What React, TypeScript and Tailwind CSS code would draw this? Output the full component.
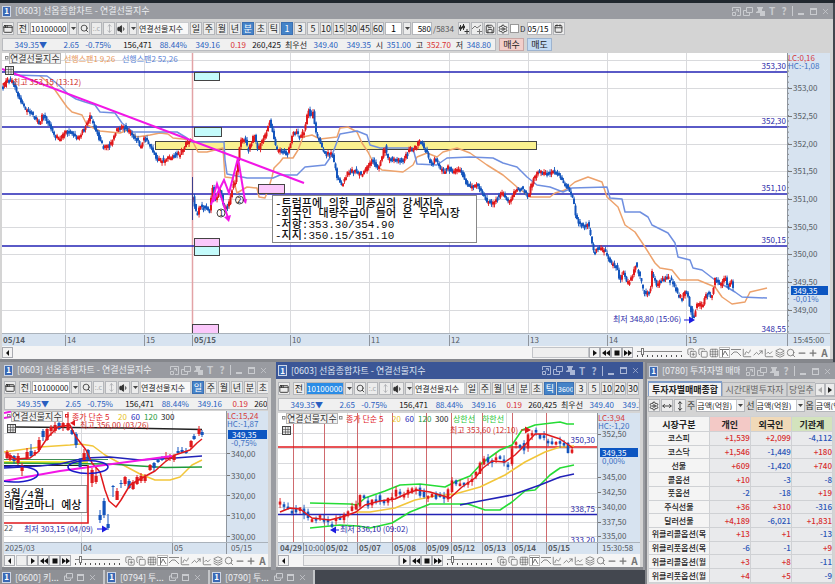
import React from "react";
import {
  AppWindow, Calendar, ChartLine, ChartSpline, Copy, CopyPlus, Grid3x3, Layers, Minus,
  MoveHorizontal, MoveVertical, Plus, Save, Search, Settings, TrendingUp, Volume1, X,
} from "lucide-react";

type Pt = [number, number];
const RED = "#e0191c";
const BLUE = "#1455bd";
const NAVY = "#2a28a8";
const FONT = "font-['Noto_Sans_CJK_KR',sans-serif]";
const MONO = "font-['Liberation_Mono','Noto_Sans_CJK_KR',monospace]";

const toPoints = (s: string): Pt[] => s.split(" ").map((p) => p.split(",").map(Number) as Pt);

function valueAt(pts: Pt[], x: number) {
  if (x <= pts[0][0]) return pts[0][1];
  for (let i = 1; i < pts.length; i++) {
    if (x <= pts[i][0]) {
      const [x0, y0] = pts[i - 1];
      const [x1, y1] = pts[i];
      return y0 + ((y1 - y0) * (x - x0)) / (x1 - x0 || 1);
    }
  }
  return pts[pts.length - 1][1];
}

const noise = (n: number) => {
  const v = Math.sin(n * 127.1 + 3.7) * 43758.5453;
  return v - Math.floor(v) - 0.5;
};

/* Candles that follow a price path at a fixed step. */
function Candles({ path, step, width, spread }: { path: string; step: number; width: number; spread: number }) {
  const pts = toPoints(path);
  const end = pts[pts.length - 1][0];
  const out: React.ReactNode[] = [];
  for (let x = pts[0][0]; x <= end; x += step) {
    const open = valueAt(pts, x - step) + noise(x) * spread;
    const close = valueAt(pts, x) + noise(x + 9) * spread;
    const up = close < open;
    const top = Math.min(open, close);
    const h = Math.max(2.6, Math.abs(open - close));
    const color = up ? RED : BLUE;
    const a = Math.abs(noise(x + 31)) * spread * 1.5;
    const b = Math.abs(noise(x + 57)) * spread * 1.5;
    out.push(
      <g key={x} fill={color}>
        <rect x={x - 0.4} y={top - a} width={0.9} height={h + a + b} />
        <rect x={x - width / 2} y={top} width={width} height={h} />
      </g>
    );
  }
  return <g>{out}</g>;
}

const Line = ({ p, c, w = 1.2 }: { p: string; c: string; w?: number }) => (
  <polyline points={p} fill="none" stroke={c} strokeWidth={w} strokeLinejoin="round" />
);

function T({ x, y, c = "#555b63", s = 9, end, bold, children }: {
  x: number; y: number; c?: string; s?: number; end?: boolean; bold?: boolean; children: React.ReactNode;
}) {
  return (
    <text x={x} y={y} fill={c} fontSize={s} textAnchor={end ? "end" : "start"} fontWeight={bold ? 700 : 400}>
      {children}
    </text>
  );
}

const Rules = ({ xs = [], ys = [], l, r, t, b, c = "#d9dadd" }: {
  xs?: number[]; ys?: number[]; l: number; r: number; t: number; b: number; c?: string;
}) => (
  <g stroke={c}>
    {xs.map((x) => <line key={"x" + x} x1={x + 0.5} x2={x + 0.5} y1={t} y2={b} />)}
    {ys.map((y) => <line key={"y" + y} y1={y + 0.5} y2={y + 0.5} x1={l} x2={r} />)}
  </g>
);

const GridMark = ({ x, y }: { x: number; y: number }) => (
  <g stroke="#444" fill="#e6e6e6">
    <rect x={x + 0.5} y={y + 0.5} width={8} height={8} />
    <path d={`M${x + 1} ${y + 3.5}h7M${x + 1} ${y + 6}h7M${x + 3.5} ${y + 1}v7M${x + 6} ${y + 1}v7`} strokeWidth={0.6} />
  </g>
);

const Bullet = ({ x, y, c = "#888" }: { x: number; y: number; c?: string }) => (
  <rect x={x + 0.5} y={y - 5.5} width={2.5} height={2.5} fill="none" stroke={c} />
);

const LegendName = ({ x, y }: { x: number; y: number }) => (
  <g>
    <Bullet x={x - 6} y={y} />
    <rect x={x - 1.5} y={y - 8.5} width={51} height={10} fill="#f2f2f2" stroke="#b5b5b5" />
    <T x={x - 1} y={y} c="#333">연결선물지수</T>
  </g>
);

const MAIN_A =
  "3,86 8,79 12,82 17,92 20,101 25,108 32,114 40,124 42,115 48,121 53,133 60,139 67,131 78,138 85,127 90,117 95,127 101,144 110,146 115,132 122,125 128,130 136,138 140,147 144,138 150,145 157,159 165,160 172,155 180,153 187,142 191,140";
const MAIN_B =
  "193,198 197,217 200,205 205,208 210,210 212,185 215,200 220,190 224,208 228,207 232,190 236,178 238,160 240,142 245,138 248,152 254,135 258,150 263,140 267,132 269,120 272,130 276,149 288,154 293,130 300,136 305,130 308,107 311,118 313,113 316,132 320,143 325,154 332,153 337,177 342,185 347,173 355,170 362,175 372,160 378,168 385,147 388,158 403,160 410,147 413,150 420,141 425,149 430,162 436,160 443,172 448,167 453,172 460,169 465,181 470,186 477,183 487,201 492,203 497,197 503,192 509,203 515,190 522,187 528,196 533,180 537,172 548,174 555,170 562,180 568,188 573,200 576,217 580,225 588,224 591,237 594,253 598,247 605,250 610,262 617,267 620,282 623,272 628,283 632,277 635,263 640,277 644,293 650,292 652,273 657,285 665,277 672,280 677,293 682,298 686,290 690,307 693,318 697,305 703,303 707,293 712,295 715,278 721,285 725,277 728,290 731,281 733,286";
const SPAN1 =
  "40,76 50,84 55,90 62,100 67,107 72,112 82,115 87,125 100,131 120,133 128,130 137,137 150,135 160,133 168,134 173,138 192,140 198,152 207,152 223,148 225,177 233,178 237,193 247,187 257,188 259,197 265,198 268,190 272,177 274,168 280,162 283,158 293,158 298,150 303,137 312,135 320,139 337,137 340,128 348,127 357,132 362,143 368,152 373,162 382,170 403,172 413,165 417,157 427,153 437,157 443,152 457,148 470,153 487,165 503,175 517,187 530,197 550,197 555,193 565,190 575,182 588,177 602,182 607,197 618,207 625,225 635,232 645,247 655,263 660,268 672,270 680,280 698,280 715,287 722,297 732,304 745,302 750,292 767,288";
const SPAN2 =
  "14,75 47,76 55,82 62,88 68,94 76,99 85,102 95,105 100,112 115,113 122,123 133,132 177,132 187,138 192,142 224,142 225,160 227,174 247,178 273,178 280,175 297,175 305,167 325,165 332,155 340,134 357,131 367,135 370,145 380,148 413,148 417,164 437,165 447,158 470,157 493,158 503,163 517,167 527,177 537,185 550,187 563,192 572,188 607,187 610,198 622,199 625,212 640,212 648,217 652,225 668,233 675,243 678,257 690,260 693,268 702,270 715,280 735,292 742,297 767,298";

function MainChart() {
  const hs = [60, 88, 116, 144, 171, 199, 227, 254, 282, 310];
  const labels: [string, number][] = [
    ["353,00", 88], ["352,50", 116], ["352,00", 144], ["351,50", 171], ["351,00", 199],
    ["350,50", 227], ["350,00", 254], ["349,50", 282], ["349,00", 310],
  ];
  const levels: [string, number][] = [["353,30", 72], ["352,30", 127], ["351,10", 194], ["350,15", 246]];
  return (
    <svg viewBox="2 53 828 293" className={`block h-auto w-full ${FONT}`} role="img" aria-label="연결선물지수 분봉 차트">
      <rect x="2" y="53" width="785" height="281" fill="#fff" />
      <rect x="787" y="53" width="43" height="293" fill="#d7e3f0" />
      <rect x="2" y="334" width="785" height="12" fill="#d7e3f0" />
      <Rules xs={[65, 144, 290, 369, 449, 528, 607, 686]} ys={hs} l={2} r={787} t={53} b={334} />
      <line x1="192.500" x2="192.500" y1="53" y2="334" stroke="#e3a3a6" strokeWidth="1.500" />
      <rect x="155.500" y="141.500" width="381" height="8" fill="#faf18f" stroke="#444" />
      {levels.map(([t, y]) => (
        <g key={t}>
          <line x1="2" x2="787" y1={y} y2={y} stroke="#2323b4" strokeWidth="1.600" />
          <T x={786} y={y - 3} c={NAVY} s={8} end>{t}</T>
        </g>
      ))}
      <T x={786} y={332} c={NAVY} s={8} end>348,55</T>
      <Line p={SPAN1} c="#eda26c" w={1.5} />
      <Line p={SPAN2} c="#6f8fe0" w={1.5} />
      <Candles path={MAIN_A} step={1.5} width={2} spread={4} />
      <Candles path={MAIN_B} step={1.5} width={2} spread={4} />
      <line x1="192.500" x2="192.500" y1="177" y2="220" stroke="#3c3f8c" />
      <g stroke="#444">
        <rect x="194.500" y="72.500" width="25" height="8" fill="#c4fbfb" />
        <rect x="194.500" y="127.500" width="27" height="9" fill="#c4fbfb" />
        <rect x="194.500" y="238.500" width="25" height="8" fill="#fbc8fb" />
        <rect x="194.500" y="246.500" width="25" height="9" fill="#c4fbfb" />
        <rect x="192.500" y="324.500" width="26" height="9" fill="#fbc8fb" />
        <rect x="258.500" y="184.500" width="26" height="9" fill="#fbc8fb" />
      </g>
      <line x1="2" y1="69" x2="304" y2="183" stroke="#f216e6" strokeWidth="2" />
      <g stroke="#f216e6" fill="none" strokeWidth="2">
        <path d="M211 205L217 184L228 218" />
        <path d="M213 202L224 180L229 193L238 158L245 201" />
      </g>
      <path d="M224 217l7-2l-2 7zM242 200l5-1l-1 5z" fill="#f216e6" />
      <g fill="none" stroke="#444">
        <circle cx="221" cy="213" r="4" />
        <circle cx="239.500" cy="200" r="4" />
      </g>
      <T x={219} y={216} c="#222" s={8}>1</T>
      <T x={237} y={203} c="#222" s={8}>2</T>
      <rect x="272.500" y="195.500" width="204" height="47" fill="#fff" stroke="#888" />
      <g className={MONO} fill="#111" fontSize="11" fontWeight="500">
        <text x="275" y="207">-트럼프에 의한 미증시의 강세지속</text>
        <text x="275" y="217">-외국인 대량수급이 들어 온 우리시장</text>
        <text x="275" y="228">-저항:353.30/354.90</text>
        <text x="275" y="239">-지지:350.15/351.10</text>
      </g>
      <LegendName x={11} y={62} />
      <T x={64} y={62} c="#e8985c" s={8}>선행스팬1 9,26</T>
      <T x={122} y={62} c="#5b83d6" s={8}>선행스팬2 52,26</T>
      <T x={13} y={85} c="#d02a2a" s={8}>최고 353,15 (13:12)</T>
      <path d="M2 84l5-4v8z" fill={RED} />
      <GridMark x={5} y={66} />
      <T x={613} y={322} c={NAVY} s={8}>최저 348,80 (15:06)</T>
      <path d="M684 319.500h5v-3l6 3.500l-6 3.500v-3h-5z" fill="#1c1ce0" />

      <line x1="787.500" x2="787.500" y1="53" y2="346" stroke="#8e959e" />
      <line x1="2" x2="830" y1="333.500" y2="333.500" stroke="#aab2bb" />
      {Array.from({ length: 50 }, (_, i) => (
        <line key={i} x1="788" x2="789" y1={60 + i * 5.55} y2={60 + i * 5.55} stroke="#888" />
      ))}
      {labels.map(([t, y]) => (
        <g key={t}>
          <line x1="788" x2="792" y1={y + 0.5} y2={y + 0.5} stroke="#777" />
          <T x={793} y={y + 3} s={8}>{t}</T>
        </g>
      ))}
      <T x={788} y={61} c="#d63a3a" s={8}>LC:0,16</T>
      <T x={788} y={69} c="#3f72c4" s={8}>HC:-1,08</T>
      <rect x="791" y="286" width="37" height="9" fill="#0c56c2" />
      <T x={793} y={294} c="#fff" s={8}>349,35</T>
      <T x={793} y={302} c="#3f72c4" s={8}>-0,01%</T>
      <Rules xs={[65, 144, 192, 290, 369, 449, 528, 607, 686]} l={2} r={2} t={335} b={346} c="#8e959e" />
      <T x={3} y={343} s={8} bold>05/14</T>
      <T x={194} y={343} s={8} bold>05/15</T>
      {([["14", 67], ["15", 146], ["10", 292], ["11", 371], ["12", 451], ["13", 530], ["14", 609], ["15", 688]] as [string, number][]).map(([t, x]) => (
        <T key={x} x={x} y={343} s={8}>{t}</T>
      ))}
      <T x={793} y={343} s={8}>15:45:00</T>
    </svg>
  );
}

/* x, wick top, body top, body bottom, wick bottom, up */
const DAILY: [number, number, number, number, number, number][] = [
  [7, 450, 452, 458, 459, 1], [10, 453, 455, 460, 461, 1], [14, 455, 456, 461, 464, 0], [18, 453, 456, 463, 465, 1],
  [22, 463, 465, 471, 476, 1], [27, 448, 452, 458, 460, 1], [31, 444, 451, 456, 457, 0], [35, 450, 452, 454, 456, 1],
  [39, 437, 440, 450, 452, 1], [43, 429, 431, 437, 441, 0], [47, 428, 429, 440, 441, 1], [51, 425, 427, 431, 436, 1],
  [55, 421, 425, 431, 433, 1], [59, 421, 423, 429, 430, 0], [63, 422, 423, 427, 431, 1], [68, 412, 423, 430, 431, 1],
  [72, 427, 430, 434, 435, 0], [76, 432, 434, 445, 448, 0], [80, 458, 460, 467, 469, 0], [84, 449, 453, 460, 461, 1],
  [88, 449, 450, 459, 460, 0], [92, 468, 470, 483, 487, 1], [96, 468, 476, 482, 484, 1], [100, 510, 515, 520, 523, 0],
  [104, 498, 501, 515, 518, 0], [108, 514, 524, 528, 530, 0], [113, 485, 486, 487, 497, 0], [117, 488, 491, 500, 500, 1],
  [121, 480, 483, 484, 488, 0], [125, 476, 477, 484, 486, 1], [129, 479, 481, 488, 489, 0], [133, 480, 482, 489, 490, 1],
  [137, 475, 477, 484, 485, 1], [141, 473, 476, 481, 483, 1], [145, 474, 477, 481, 483, 1], [150, 464, 465, 470, 471, 1],
  [154, 462, 463, 468, 472, 0], [158, 459, 460, 462, 463, 0], [162, 456, 457, 460, 461, 0], [166, 452, 456, 459, 461, 1],
  [170, 454, 456, 459, 461, 1], [174, 454, 455, 460, 462, 1], [178, 447, 451, 453, 454, 0], [182, 447, 450, 452, 453, 0],
  [186, 448, 451, 453, 454, 0], [191, 440, 441, 447, 449, 1], [194, 434, 436, 439, 440, 0], [199, 426, 429, 434, 436, 1],
  [202, 430, 432, 435, 437, 0],
];

function DailyChart() {
  const labels: [string, number][] = [["340,00", 453], ["330,00", 475], ["320,00", 495], ["310,00", 515], ["300,00", 536]];
  return (
    <svg viewBox="4 411 264 143" className={`block h-auto w-full ${FONT}`} role="img" aria-label="연결선물지수 일봉 차트">
      <rect x="4" y="411" width="222" height="131" fill="#fff" />
      <rect x="226" y="411" width="42" height="143" fill="#d7e3f0" />
      <rect x="4" y="542" width="222" height="12" fill="#d7e3f0" />
      <Rules xs={[81, 172]} ys={[433, 453, 475, 495, 515, 536]} l={4} r={226} t={411} b={542} />
      <rect x="4" y="461" width="84" height="3" fill="#f0ea3c" />
      <path d="M4 465.500h84" stroke="#222" />
      <path d="M4 459.500h104" stroke="#3f8f56" />
      <Line p="15,427 125,428 202,429.500" c="#222" w={1.5} />
      <Line p="4,452 40,447 70,445 80,444 93,446 105,455 125,466 140,474 155,480 170,480 180,477 192,465 202,460" c="#f2c63a" w={1.5} />
      <Line p="4,463 110,464 140,466 165,467.500 202,467" c="#1f9a3c" w={1.5} />
      <Line p="4,468 40,466 60,464 85,458 110,457 140,460 175,458 202,456" c="#2222b8" w={1.5} />
      {DAILY.map(([x, wt, t, b, wb, up]) => (
        <g key={x} fill={up ? RED : BLUE}>
          <rect x={x - 0.5} y={wt} width={1} height={wb - wt} />
          <rect x={x - 1.5} y={t} width={3.2} height={b - t} />
        </g>
      ))}
      <Line p="7,454 15,459 30,458 38,452 48,437 58,427 70,425 76,437 86,450 92,463 100,472 105,490 109,501 116,507 121,500 130,485 140,479 155,471 165,462 175,455 190,450 197,443 202,439" c={RED} w={1.5} />
      <path d="M4 481L60 471L172 456M4 418L45 411M4 413L28 408" stroke="#f216e6" strokeWidth="2" fill="none" />
      <g fill="none" stroke="#1a1ac8" strokeWidth="1.600">
        <ellipse cx="88" cy="467" rx="20" ry="6.500" />
        <ellipse cx="14" cy="474" rx="24" ry="8" />
      </g>
      <rect x="-4" y="485.500" width="91" height="27" fill="#fff" stroke="#888" />
      <g className={MONO} fill="#111" fontSize="11" fontWeight="500">
        <text x="4" y="498">3월/4월</text>
        <text x="4" y="509">데칼코마니 예상</text>
      </g>
      <path d="M4 523h84V465" fill="none" stroke={RED} strokeWidth="1.600" />
      <T x={4} y={531} s={8}>22</T>
      <T x={24} y={532} c={NAVY} s={8}>최저 303,15 (04/09)</T>
      <path d="M97 528.500h5v-3l6 3.500l-6 3.500v-3h-5z" fill="#1c1ce0" />
      <LegendName x={13} y={420} />
      <Bullet x={65} y={420} c={RED} />
      <T x={72} y={420} c={RED} s={8}>종가 단순 5</T>
      <T x={118} y={420} c="#e8c21c" s={8}>20</T>
      <T x={131} y={420} c="#2222b8" s={8}>60</T>
      <T x={144} y={420} c="#1f9a3c" s={8}>120</T>
      <T x={161} y={420} c="#222" s={8}>300</T>
      <T x={80} y={428} c="#d02a2a" s={8}>최고 356,00 (03/26)</T>
      <path d="M70 423l5-3v6z" fill={RED} />
      <GridMark x={7} y={424} />
      <line x1="226.500" x2="226.500" y1="411" y2="554" stroke="#8e959e" />
      <line x1="4" x2="268" y1="542.500" y2="542.500" stroke="#aab2bb" />
      {labels.map(([t, y]) => (
        <g key={t}>
          <line x1="227" x2="230" y1={y + 0.5} y2={y + 0.5} stroke="#777" />
          <T x={231} y={y + 4} s={8}>{t}</T>
        </g>
      ))}
      <T x={227} y={419} c="#d63a3a" s={8}>LC:15,24</T>
      <T x={227} y={427} c="#3f72c4" s={8}>HC:-1,87</T>
      <rect x="228" y="430" width="39" height="9" fill="#0c56c2" />
      <T x={232} y={438} c="#fff" s={8}>349,35</T>
      <T x={231} y={446} c="#3f72c4" s={8}>-0,75%</T>
      <Rules xs={[81, 172]} l={4} r={4} t={543} b={554} c="#8e959e" />
      <T x={5} y={551} s={8}>2025/03</T>
      <T x={83} y={551} s={8}>04</T>
      <T x={174} y={551} s={8}>05</T>
      <T x={231} y={551} s={8}>05/15</T>
    </svg>
  );
}

const TICK =
  "280,503 285,508 290,510 296,510 302,506 306,520 312,518 320,518 326,520 330,526 335,519 341,517 346,511 350,508 355,511 358,495 362,496 367,505 372,501 376,498 382,502 388,498 392,495 397,490 402,496 408,491 413,488 417,491 422,496 428,494 433,496 440,498 446,498 451,482 457,482 462,483 470,480 476,474 482,458 488,462 494,456 499,455 504,464 508,466 512,447 518,443 524,448 529,431 535,434 541,436 547,442 552,440 558,440 563,444 568,452 574,452";

function TickChart() {
  const reds = [293, 324, 357, 392, 426, 451, 482, 512, 546];
  const dates: [string, number][] = [
    ["04/29", 280], ["05/02", 326], ["05/07", 359], ["05/08", 394], ["05/09", 427], ["05/12", 453],
    ["05/13", 484], ["05/14", 514], ["05/15", 548],
  ];
  const labels: [string, number][] = [
    ["352,50", 434], ["345,00", 477], ["342,50", 492], ["340,00", 507], ["337,50", 522], ["335,00", 536],
  ];
  return (
    <svg viewBox="278 413 362 141" className={`block h-auto w-full ${FONT}`} role="img" aria-label="연결선물지수 틱 차트">
      <rect x="278" y="413" width="319" height="129" fill="#fff" />
      <rect x="597" y="413" width="43" height="141" fill="#d7e3f0" />
      <rect x="278" y="542" width="319" height="12" fill="#d7e3f0" />
      <Rules xs={[302, 347, 380, 414, 474, 506, 536, 568]} ys={[433, 448, 463, 478, 493, 507, 522, 536]} l={278} r={597} t={413} b={542} />
      <Rules xs={reds} l={278} r={278} t={413} b={542} c="#cf6a6e" />
      <path d="M278 447h319" stroke={RED} strokeWidth="1.600" />
      <path d="M278 514.500h319" stroke="#2323b4" strokeWidth="1.500" />
      <Line p="310,503 350,504 357,505 365,498 385,491 400,485 420,484 445,487 455,482 470,476 482,463 500,450 512,445 522,430 535,425 560,422 567,424 574,424" c="#25dc35" w={1.6} />
      <Line p="310,528 340,525 358,526 370,528 392,523 410,512 430,504 450,504 468,504 485,510 500,510 512,502 525,491 535,490 550,475 560,468 574,465" c="#25dc35" w={1.6} />
      <Line p="356,512 370,512 395,508 415,500 435,496 455,494 480,487 505,475 525,462 545,452 560,447 574,446" c="#f2c63a" w={1.6} />
      <Line p="460,505 480,501 512,495 540,485 560,477 574,474" c="#2222b8" w={1.6} />
      <Candles path={TICK} step={4} width={2.6} spread={6} />
      <Line p="280,512 290,508 300,509 312,518 330,520 345,516 356,512 365,505 380,501 395,499 408,493 417,490 430,492 450,498 462,487 475,478 483,468 492,461 505,462 515,455 525,445 535,434 545,434 560,439 573,448" c={RED} w={1.5} />
      <LegendName x={288} y={422} />
      <Bullet x={339} y={422} />
      <T x={346} y={422} c={RED} s={8}>종가 단순 5</T>
      <T x={392} y={422} c="#e8c21c" s={8}>20</T>
      <T x={405} y={422} c="#2222b8" s={8}>60</T>
      <T x={418} y={422} c="#1f9a3c" s={8}>120</T>
      <T x={435} y={422} c="#222" s={8}>300</T>
      <T x={453} y={422} c="#25c435" s={8}>상한선</T>
      <T x={482} y={422} c="#25c435" s={8}>하한선</T>
      <T x={450} y={433} c="#d02a2a" s={8}>최고 353,60 (12:10)</T>
      <path d="M521 429.500h4v-3l6 3.500l-6 3.500v-3h-4z" fill={RED} />
      <T x={340} y={532} c={NAVY} s={8}>최저 336,10 (09:02)</T>
      <path d="M339 529.500h-3v-3l-6 3.500l6 3.500v-3h3z" fill="#1c1ce0" />
      <GridMark x={282} y={426} />
      <T x={595} y={443} c={NAVY} s={8} end>350,30</T>
      <T x={595} y={512} c={NAVY} s={8} end>338,75</T>
      <svg x="560" y="530" width="36" height="12" viewBox="560 530 36 12">
        <T x={595} y={543} c={NAVY} s={8} end>333,20</T>
      </svg>
      <line x1="597.500" x2="597.500" y1="413" y2="554" stroke="#8e959e" />
      <line x1="278" x2="640" y1="542.500" y2="542.500" stroke="#aab2bb" />
      {labels.map(([t, y]) => (
        <g key={t}>
          <line x1="598" x2="601" y1={y + 0.5} y2={y + 0.5} stroke="#777" />
          <T x={602} y={y + 3} s={8}>{t}</T>
        </g>
      ))}
      <T x={598} y={421} c="#d63a3a" s={8}>LC:3,94</T>
      <T x={598} y={429} c="#3f72c4" s={8}>HC:-1,20</T>
      <rect x="600" y="448" width="38" height="9" fill="#0c56c2" />
      <T x={602} y={456} c="#fff" s={8}>349,35</T>
      <T x={602} y={464} c="#3f72c4" s={8}>0,00%</T>
      <Rules xs={[303, ...reds.slice(1)]} l={278} r={278} t={543} b={554} c="#8e959e" />
      <T x={304} y={551} s={8}>10:00</T>
      {dates.map(([t, x]) => <T key={t} x={x} y={551} s={8} bold>{t}</T>)}
      <T x={602} y={551} s={8}>15:30:58</T>
    </svg>
  );
}

function Badge() {
  return (
    <span className="flex h-[11px] w-[9px] shrink-0 items-center justify-center border border-[#cdd6e6] bg-[#3a68b4] text-[8px] font-bold leading-none text-white">1</span>
  );
}

const Ctl = ({ label, children }: { label: string; children: React.ReactNode }) => (
  <button type="button" aria-label={label} className="flex h-3 w-3 shrink-0 items-center justify-center text-[10px] font-bold leading-none">
    {children}
  </button>
);

function TitleBar({ title, active, size = "h-4", noText }: { title: string; active?: boolean; size?: string; noText?: boolean }) {
  return (
    <header className={`flex ${size} shrink-0 items-center gap-1 overflow-hidden px-0.5 text-[9px] ${active ? "bg-[#3b5696] text-[#dfe5f2]" : "bg-[#999ba1] text-[#eceef1]"}`}>
      <Badge />
      <h2 className="min-w-0 flex-1 overflow-hidden whitespace-nowrap leading-3">{title}</h2>
      <div className={`flex shrink-0 items-center ${active ? "text-[#a9b6d6]" : "text-[#c9cbcf]"}`}>
        <Ctl label="축소"><svg width="9" height="9" viewBox="0 0 9 9" fill="none" stroke="currentColor"><path d="M.5 4V.5h8v8H5M.5 5.500h3v3h-3zM4 4.500l2-2M6.500 5V2.500H4" /></svg></Ctl>
        <Ctl label="복제"><svg width="10" height="9" viewBox="0 0 10 9" fill="none" stroke="currentColor"><path d="M3.500.5h6v5h-6zM3 3.500H.5v5h6V6" /></svg></Ctl>
        <Ctl label="고정"><svg width="9" height="9" viewBox="0 0 9 9" fill="currentColor"><path d="M1 0h6v1L6 2v2h3v5H4V6H0V5l2-1V2L1 1z" /></svg></Ctl>
        {!noText && <Ctl label="글꼴">T</Ctl>}
        <Ctl label="도움말">?</Ctl>
        <span className="mx-0.5 h-2.5 w-px bg-current" />
        <Ctl label="최소화"><span className="mt-1.5 h-0.5 w-1.5 bg-current" /></Ctl>
        <Ctl label="최대화"><span className="h-[7px] w-[7px] border border-t-2 border-current" /></Ctl>
        <Ctl label="닫기"><X size={9} /></Ctl>
      </div>
    </header>
  );
}

const BTN = "flex h-[13px] shrink-0 items-center justify-center border border-[#b4b6ba] bg-[#ececec] text-[9px] leading-none text-[#222]";
const BTN_ON = "flex h-[13px] shrink-0 items-center justify-center border border-[#3b6fb2] bg-[#4583c8] text-[9px] leading-none text-white";

function Btn({ w = "w-3", on, label, children }: { w?: string; on?: boolean; label?: string; children: React.ReactNode }) {
  return <button type="button" aria-label={label} className={`${on ? BTN_ON : BTN} ${w}`}>{children}</button>;
}

const Down = () => (
  <svg width="5" height="3" viewBox="0 0 5 3"><path d="M0 0h5L2.500 3z" fill="#444" /></svg>
);

function Toolbar({ unit, nums, activeNum, extra, selected, tick }: {
  unit: string; nums: string[]; activeNum?: string; extra?: boolean; selected?: boolean; tick?: string;
}) {
  return (
    <div className="flex h-[19px] items-center gap-px overflow-hidden">
      <Btn label="창"><AppWindow size={10} className="shrink-0" /></Btn>
      <span className="w-px shrink-0" />
      <Btn>전</Btn>
      <input aria-label="종목코드" defaultValue="10100000" className={`h-[13px] w-[38px] shrink-0 border border-[#b4b6ba] text-[8px] leading-none ${selected ? "bg-[#2a8ce6] text-white" : "bg-white text-[#222]"}`} />
      <Btn w="w-2" label="종목 목록"><Down /></Btn>
      <Btn label="검색"><Search size={9} className="shrink-0" /></Btn>
      <Btn w="w-[11px]" label="코드 연결"><span className="text-[7px] text-[#a5a7ab]">:.c</span></Btn>
      <Btn label="조절"><MoveVertical size={9} className="shrink-0 text-[#a5a7ab]" /></Btn>
      <Btn label="소리"><Volume1 size={10} className="shrink-0" fill="#333" /></Btn>
      <Btn w="w-2" label="소리 목록"><Down /></Btn>
      <input aria-label="종목명" defaultValue="연결선물지수" className="h-[13px] w-[51px] shrink-0 border border-[#c8cacd] bg-[#f8f8f8] text-[8px] leading-none text-[#222]" />
      {["일", "주", "월", "년", "분", "초", "틱"].map((u) => <Btn key={u} on={u === unit}>{u}</Btn>)}
      {tick && <input aria-label="틱 수" defaultValue={tick} className="h-[13px] w-[17px] shrink-0 border border-[#3b6fb2] bg-[#4583c8] text-[7px] leading-none text-white" />}
      {nums.map((n) => <Btn key={n} on={n === activeNum}>{n}</Btn>)}
      {extra && (
        <>
          <input aria-label="간격" defaultValue="1" className="h-[13px] w-[17px] shrink-0 border border-[#b4b6ba] bg-white text-center text-[9px] leading-none" />
          <Btn w="w-2" label="간격 목록"><Down /></Btn>
          <input aria-label="조회 개수" defaultValue="580" className="h-[13px] w-5 shrink-0 border border-[#b4b6ba] bg-white text-right text-[8px] leading-none" />
          <span className="w-6 shrink-0 text-[8px] text-[#555]">/5834</span>
          <Btn label="봉 추가"><svg width="10" height="10" viewBox="0 0 10 10" stroke="#333" fill="#333"><path d="M1.500 1v6M4.500 0v6M.5 3h2v2h-2zM3.500 2h2v2h-2zM8 5v5M5.500 7.500h5" /></svg></Btn>
          <Btn label="선 추가"><svg width="10" height="10" viewBox="0 0 10 10" stroke="#777" fill="none"><path d="M0 5l3-3l2 2l4-3M7.500 5v5M5 7.500h5" /></svg></Btn>
          <Btn label="저장"><Save size={10} className="shrink-0" /></Btn>
          <Btn label="설정"><Settings size={10} className="shrink-0" /></Btn>
          <label className="flex shrink-0 items-center gap-px text-[8px] leading-none text-[#333]">
            <input type="checkbox" className="h-[9px] w-[9px] appearance-none border border-[#999] bg-white" />D
          </label>
          <input aria-label="날짜" defaultValue="05/15" className="h-[13px] w-[25px] shrink-0 border border-[#b4b6ba] bg-white text-[8px] leading-none" />
          <Btn label="달력"><Calendar size={9} className="shrink-0" /></Btn>
        </>
      )}
    </div>
  );
}

function QuoteRow({ orders }: { orders?: boolean }) {
  const cells: [string, string, string][] = [
    ["349.35▼", "w-[44px]", "text-[#2a5fc0]"], ["2.65", "w-8", "text-[#2a5fc0]"], ["-0.75%", "w-8", "text-[#2a5fc0]"],
    ["156,471", "w-[41px]", "text-[#111]"], ["88.44%", "w-[35px]", "text-[#2a5fc0]"], ["349.16", "w-[33px]", "text-[#2a5fc0]"],
    ["0.19", "w-[26px]", "text-[#d83030]"], ["260,425", "w-[35px]", "text-[#111]"], ["최우선", "w-[26px]", "text-[#222]"],
    ["349.40", "w-[31px]", "text-[#2a5fc0]"], ["349.35", "w-[33px]", "text-[#2a5fc0]"], ["시", "w-3", "text-[#222]"],
    ["351.00", "w-7", "text-[#2a5fc0]"], ["고", "w-3", "text-[#222]"], ["352.70", "w-7", "text-[#d83030]"],
    ["저", "w-3", "text-[#222]"], ["348.80", "w-7", "text-[#2a5fc0]"],
  ];
  return (
    <div className="flex h-[13px] items-center gap-[3px] overflow-hidden">
      <div className="flex h-full items-center overflow-hidden border border-[#b9bbbf] bg-[#f0f0f0] pr-1 text-[8px] leading-none">
        {cells.map(([t, w, c], i) => <span key={i} className={`shrink-0 whitespace-nowrap text-right ${w} ${c}`}>{t}</span>)}
      </div>
      {orders && (
        <>
          <button type="button" className="h-[13px] w-[25px] shrink-0 border border-[#c9a6a4] bg-[#f3cfcb] text-[9px] leading-none text-[#222]">매수</button>
          <button type="button" className="h-[13px] w-[25px] shrink-0 border border-[#9db3cf] bg-[#c3dbf3] text-[9px] leading-none text-[#222]">매도</button>
        </>
      )}
    </div>
  );
}

function ScrollRow({ before, thumb }: { before: string; thumb: string }) {
  const sb = "flex h-[11px] w-[11px] shrink-0 items-center justify-center border border-[#a9abb0] bg-[#f3f3f3]";
  const shapes: [string, string][] = [
    ["재생", "M2 1l4 3l-4 3z"], ["뒤로", "M4 1v6L0 4zM8 1v6L4 4z"], ["정지", "M1.500 1.500h5v5h-5z"], ["앞으로", "M0 1l4 3l-4 3zM4 1l4 3l-4 3z"],
  ];
  const tool = "flex h-[11px] w-[11px] shrink-0 items-center justify-center text-[#777]";
  return (
    <div className="flex h-[13px] items-center bg-[#f5f5f5]">
      <button type="button" aria-label="왼쪽" className={sb}><svg width="8" height="8" viewBox="0 0 8 8"><path d="M5 1v6L2 4z" fill="#111" /></svg></button>
      <div className={before} />
      <div className={`h-[11px] border border-[#c2c4c8] bg-[#efefef] ${thumb}`} />
      {shapes.map(([l, d]) => (
        <button key={l} type="button" aria-label={l} className={sb}><svg width="8" height="8" viewBox="0 0 8 8"><path d={d} fill="#111" /></svg></button>
      ))}
      <div className="mx-1 flex w-[45px] shrink-0 flex-col">
        <input type="range" aria-label="확대 비율" defaultValue={10} className="block h-[7px] w-full appearance-none bg-[linear-gradient(#8a8a8a,#8a8a8a)] bg-[length:100%_1px] bg-center bg-no-repeat [&::-webkit-slider-thumb]:h-[7px] [&::-webkit-slider-thumb]:w-[3px] [&::-webkit-slider-thumb]:appearance-none [&::-webkit-slider-thumb]:border [&::-webkit-slider-thumb]:border-[#777] [&::-webkit-slider-thumb]:bg-white" />
        <span className="flex justify-between">{Array.from({ length: 10 }, (_, i) => <i key={i} className="h-0.5 w-px bg-[#555]" />)}</span>
      </div>
      <div className="flex w-[144px] shrink-0 items-center justify-between">
        <button type="button" aria-label="새 복사" className={tool}><CopyPlus size={10} /></button>
        <button type="button" aria-label="복사" className={tool}><Copy size={10} /></button>
        <button type="button" aria-label="격자" className={tool}><Grid3x3 size={10} strokeDasharray="2 2" /></button>
        <button type="button" aria-label="기준선" className={`${tool} border border-[#bbb] bg-white`}><svg width="9" height="9" viewBox="0 0 9 9" stroke="#777" fill="none"><path d="M0 1.500h9M2.500 1v8M3 7l2-4l3 5" /></svg></button>
        <button type="button" aria-label="추세" className={tool}><svg width="10" height="9" viewBox="0 0 10 9" stroke="#888" fill="none"><path d="M0 1.500h10M0 7l3-3l3 0l4 4" /></svg></button>
        <button type="button" aria-label="선 차트" className={tool}><ChartSpline size={10} /></button>
        <button type="button" aria-label="상승선" className={tool}><TrendingUp size={10} /></button>
        <button type="button" aria-label="지표" className={tool}><ChartLine size={10} /></button>
        <button type="button" aria-label="겹치기" className={tool}><Layers size={10} /></button>
        <button type="button" aria-label="돋보기" className={tool}><Search size={10} /></button>
        <button type="button" aria-label="축소" className={tool}><Minus size={10} strokeWidth={3} /></button>
        <button type="button" aria-label="확대" className={tool}><Plus size={10} strokeWidth={3} /></button>
        <button type="button" aria-label="글자" className={`${tool} text-[10px] font-bold leading-none`}>A</button>
      </div>
    </div>
  );
}

const ROWS: [string, string, string, string][] = [
  ["코스피", "+1,539", "+2,099", "-4,112"], ["코스닥", "+1,546", "-1,449", "+180"], ["선물", "+609", "-1,420", "+740"],
  ["콜옵션", "+10", "-3", "-8"], ["풋옵션", "-2", "-18", "+19"], ["주식선물", "+36", "+310", "-316"],
  ["달러선물", "+4,189", "-6,021", "+1,831"], ["위클리콜옵션(목", "+13", "+1", "-13"], ["위클리풋옵션(목", "-6", "-1", "+9"],
  ["위클리콜옵션(월", "+3", "+8", "-11"], ["위클리풋옵션(월", "+4", "+5", "-9"],
];

function Amount({ label }: { label: string }) {
  return (
    <label className="flex shrink-0 items-center gap-px text-[9px] leading-none text-[#333]">
      {label}
      <span className="relative flex">
        <select className="h-[13px] w-[49px] appearance-none border border-[#b4b6ba] bg-white text-[8px] leading-none text-[#222]">
          <option>금액(억원)</option>
        </select>
        <span className="pointer-events-none absolute inset-y-px right-px flex w-2 items-center justify-center border-l border-[#c8cacd] bg-[#f0f0f0]"><Down /></span>
      </span>
    </label>
  );
}

function InvestorWindow() {
  return (
    <section className="row-span-2 flex min-h-0 flex-col overflow-hidden border-l-2 border-t border-[#84868b] bg-[#d4d4d4]">
      <TitleBar title="[0780] 투자자별 매매!" noText />
      <div className="flex h-[17px] shrink-0 items-end overflow-hidden pl-px text-[9px] leading-none">
        <button type="button" className="h-[15px] w-[74px] shrink-0 border border-b-0 border-t-2 border-[#7f9cc8] bg-[#f2f2f2] font-bold text-[#222]">투자자별매매종합</button>
        <button type="button" className="h-3.5 w-[65px] shrink-0 border border-b-0 border-[#b4b6ba] text-[#666]">시간대별투자자</button>
        <button type="button" className="h-3.5 min-w-0 flex-1 overflow-hidden whitespace-nowrap border border-r-0 border-b-0 border-[#b4b6ba] pl-px text-left text-[#666]">당일추</button>
        <Btn w="w-2.5" label="이전 탭"><svg width="4" height="6" viewBox="0 0 4 6"><path d="M4 0v6L0 3z" fill="#aaa" /></svg></Btn>
        <Btn w="w-2.5" label="다음 탭"><svg width="4" height="6" viewBox="0 0 4 6"><path d="M0 0v6l4-3z" fill="#222" /></svg></Btn>
      </div>
      <div className="flex h-[18px] shrink-0 items-center gap-px overflow-hidden border-t border-[#b4b6ba] pl-px">
        <Btn label="설정"><Settings size={10} className="shrink-0" /></Btn>
        <Btn label="너비"><MoveHorizontal size={10} className="shrink-0" /></Btn>
        <Btn label="높이"><MoveVertical size={10} className="shrink-0" /></Btn>
        <Amount label="주" />
        <Amount label="선" />
        <Amount label="옵" />
      </div>
      <div className="min-h-0 flex-1 pl-px pr-0.5 pb-px pt-0.5">
        <table className="h-full w-full table-fixed border-collapse text-[9px] leading-none text-[#222]">
          <thead>
            <tr className="h-[15px]">
              <th className="w-[33%] border border-[#cfd1d4] bg-[#f4f4f4] p-0">시장구분</th>
              <th className="border border-[#cfd1d4] bg-[#f3c9c6] p-0">개인</th>
              <th className="border border-[#cfd1d4] bg-[#f0d9b8] p-0">외국인</th>
              <th className="border border-[#cfd1d4] bg-[#d3e3bd] p-0">기관계</th>
            </tr>
          </thead>
          <tbody>
            {ROWS.map(([name, ...vals]) => (
              <tr key={name}>
                <th scope="row" className="overflow-hidden whitespace-nowrap border border-[#cfd1d4] bg-[#f4f4f4] p-0 text-[8px] font-medium">{name}</th>
                {vals.map((v, i) => (
                  <td key={i} className={`border border-[#cfd1d4] bg-[#e9eaec] p-0 text-right text-[8px] font-medium ${v[0] === "+" ? "text-[#d83030]" : "text-[#2a55b8]"}`}>{v}</td>
                ))}
              </tr>
            ))}
          </tbody>
        </table>
      </div>
    </section>
  );
}

function Minimized({ title }: { title: string }) {
  return (
    <div className="flex h-full w-[105px] items-center gap-1 overflow-hidden border-r-2 border-[#c4c6c9] bg-[#8e9095] px-0.5 text-[9px] leading-none text-[#eceef1]">
      <Badge />
      <span className="flex-1 whitespace-nowrap">{title}</span>
      <button type="button" aria-label="복원" className="text-[#c9cbcf]"><svg width="9" height="8" viewBox="0 0 9 8" fill="none" stroke="currentColor"><path d="M2.500.5h6v4.500h-6zM2 3H.5v4.500h6V6" /></svg></button>
      <button type="button" aria-label="최대화" className="h-[7px] w-[7px] border border-t-2 border-[#c9cbcf]" />
      <button type="button" aria-label="닫기" className="pr-1 text-[#c9cbcf]"><X size={9} /></button>
    </div>
  );
}

export default function App() {
  return (
    <main className={`flex min-h-screen flex-col border-t-[3px] border-t-[#20272e] bg-[#43474f] ${FONT}`}>
      <section className="mr-0.5 flex flex-col bg-[#d4d4d4]">
        <TitleBar title="[0603] 선옵종합차트 - 연결선물지수" />
        <div className="pl-0.5 pr-[3px]">
          <Toolbar unit="분" nums={["1", "3", "5", "10", "15", "30", "45", "60"]} activeNum="1" extra />
          <QuoteRow orders />
          <div className="mt-0.5"><MainChart /></div>
          <ScrollRow before="flex-1" thumb="w-[57px]" />
        </div>
        <div className="h-[3px] bg-[#85878c]" />
      </section>

      <div className="grid flex-1 grid-cols-[273fr_372fr_190fr] grid-rows-[auto_minmax(13px,1fr)]">
        <section className="flex min-w-0 flex-col border-l-2 border-r-2 border-[#9a9ca1] bg-[#d4d4d4]">
          <TitleBar title="[0603] 선옵종합차트 - 연결선물지수" />
          <div className="pl-0.5 pr-[3px]">
            <Toolbar unit="일" nums={[]} />
            <QuoteRow />
            <div className="mt-px"><DailyChart /></div>
            <ScrollRow before="w-px" thumb="flex-1" />
          </div>
          <div className="mt-auto h-[3px] bg-[#85878c]" />
        </section>

        <section className="flex min-w-0 flex-col border-l-[3px] border-r-2 border-[#9a9ca1] bg-[#d4d4d4]">
          <TitleBar title="[0603] 선옵종합차트 - 연결선물지수" active size="h-[17px]" />
          <div className="px-0.5 pr-[3px]">
            <Toolbar unit="틱" nums={["3", "5", "10", "20", "30", "60", "1"]} selected tick="3600" />
            <QuoteRow />
            <div className="mt-0.5"><TickChart /></div>
            <ScrollRow before="w-3.5" thumb="flex-1" />
          </div>
          <div className="mt-auto h-[3px] bg-[#85878c]" />
        </section>

        <InvestorWindow />

        <nav className="col-span-2 flex">
          <Minimized title="[0600] 키..." />
          <Minimized title="[0794] 투..." />
          <Minimized title="[0790] 투..." />
        </nav>
      </div>
    </main>
  );
}
